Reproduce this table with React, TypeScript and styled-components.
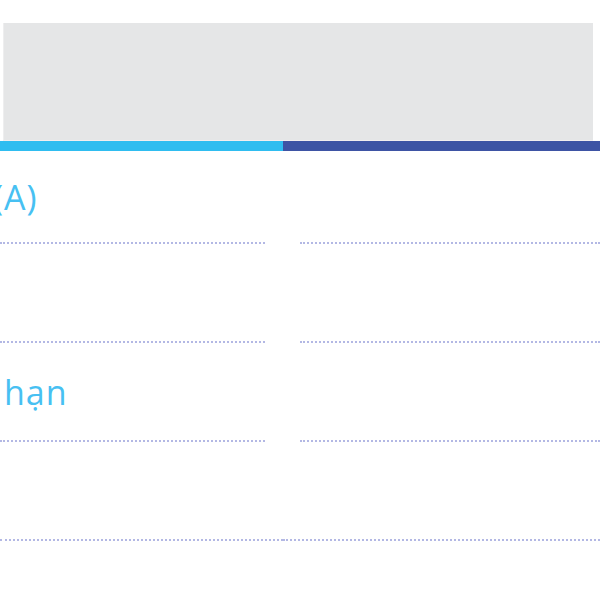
import React from "react";
import styled, { createGlobalStyle } from "styled-components";

const Global = createGlobalStyle`
  html, body { margin: 0; padding: 0; background: #ffffff; }
  body { width: 600px; height: 600px; overflow: hidden; font-family: "Open Sans", "Noto Sans", sans-serif; }
`;

const Page = styled.div`
  width: 600px;
  height: 600px;
  overflow: hidden;
  background: #fff;
  padding-top: 23px;
  box-sizing: border-box;
`;

const HeaderBox = styled.div`
  height: 117px;
  margin: 0 7px 0 3px;
  background: #e5e6e7;
  border-left: 1px solid #eeeeef;
  border-bottom: 1px solid #f3eeee;
`;

const Table = styled.div`
  display: grid;
  grid-template-columns: 283px 317px;
`;

const BarCell = styled.div<{ $color: string }>`
  height: 10px;
  background: ${(p) => p.$color};
`;

const Cell = styled.div<{ $side: "left" | "right"; $last?: boolean }>`
  height: 99px;
  display: flex;
  align-items: center;
  box-sizing: border-box;
  margin: ${(p) =>
    p.$last ? "0" : p.$side === "left" ? "0 18px 0 0" : "0 0 0 17px"};
  border-bottom: 2px dotted #b3b8e4;
`;

const FirstCell = styled(Cell)`
  height: 93px;
`;

const Label = styled.span<{ $offset: number }>`
  margin-left: ${(p) => p.$offset}px;
  color: #47c0f2;
  font-size: 34px;
  font-weight: 400;
  letter-spacing: 1px;
  white-space: nowrap;
  line-height: 1;
`;

export default function App() {
  return (
    <>
      <Global />
      <Page>
        <HeaderBox />
        <Table>
          <BarCell $color="#2fbdf0" />
          <BarCell $color="#3e54a4" />
          <FirstCell $side="left">
            <Label $offset={-7}>(A)</Label>
          </FirstCell>
          <FirstCell $side="right" />
          <Cell $side="left" />
          <Cell $side="right" />
          <Cell $side="left">
            <Label $offset={4}>hạn</Label>
          </Cell>
          <Cell $side="right" />
          <Cell $side="left" $last />
          <Cell $side="right" $last />
        </Table>
      </Page>
    </>
  );
}
